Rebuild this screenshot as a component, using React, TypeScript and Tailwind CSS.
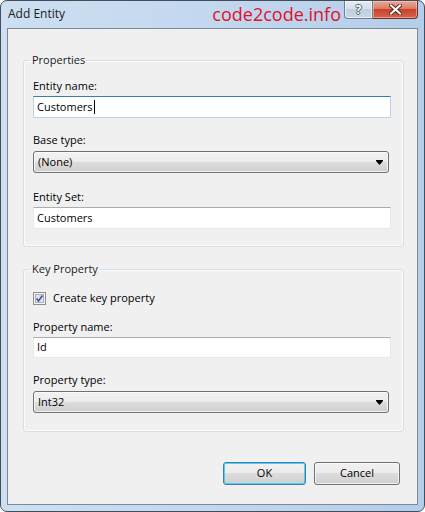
import React from "react";

const font = { fontFamily: '"Open Sans", "Noto Sans", sans-serif' };

function ComboArrow() {
    return (
        <svg width="7" height="5" viewBox="0 0 7 5" className="shrink-0">
            <path d="M0 0h7v1l-3.5 4l-3.5-4z" fill="#000" />
        </svg>
    );
}

function Combo({ value, className }: { value: string; className: string }) {
    return (
        <div
            className={`flex items-center justify-between rounded-[3px] border border-[#707070] bg-[linear-gradient(#f2f2f2_0%,#ebebeb_50%,#dddddd_50%,#cfcfcf_100%)] pl-[4px] pr-[5px] text-[11px] text-black shadow-[inset_0_0_0_1px_rgba(255,255,255,0.7)] ${className}`}
        >
            <span>{value}</span>
            <ComboArrow />
        </div>
    );
}

function TextBox({ value, focused, caret, className }: { value: string; focused?: boolean; caret?: boolean; className: string }) {
    return (
        <div
            className={`flex items-center bg-white pl-[3px] text-[11px] text-black ${
                focused
                    ? "border border-[#b9d3ea] border-t-[#3d7bad]"
                    : "border border-[#e3e9ef] border-t-[#abadb3]"
            } ${className}`}
        >
            <span>{value}</span>
            {caret && <span className="ml-px inline-block h-[14px] w-px bg-black" />}
        </div>
    );
}

function Label({ children, className }: { children: React.ReactNode; className: string }) {
    return <div className={`h-[16px] text-[11px] leading-[16px] text-black ${className}`}>{children}</div>;
}

function GroupBox({ title, className, children }: { title: string; className: string; children: React.ReactNode }) {
    return (
        <fieldset
            className={`w-[381px] rounded-[3px] border border-[#d5dfe5] pl-[9px] shadow-[inset_0_0_0_1px_#fbfbfb] ${className}`}
        >
            <legend className="-ml-[2px] h-[16px] px-[1px] text-[11px] leading-[16px] text-[#1a1a1a]">{title}</legend>
            {children}
        </fieldset>
    );
}

export default function App() {
    return (
        <div className="h-[512px] w-[425px] bg-white" style={font}>
            <div className="flex h-[512px] w-[425px] flex-col rounded-[7px] border border-[#434e5a] bg-gradient-to-r from-[#cddff1] via-[#c2d8ef] to-[#b4cde8]">
                {/* title bar */}
                <div className="flex h-[27px] items-start">
                    <span className="pl-[7px] pt-[5px] text-[12px] leading-[16px] text-[#1b1b1b]">Add Entity</span>
                    <span className="ml-auto mr-[3px] pt-[1px] text-[18px] leading-[24px] text-[#e0102c]">code2code.info</span>
                    <div className="mr-[6px] flex h-[18px]">
                        <div className="flex w-[29px] items-center justify-center rounded-bl-[4px] border border-t-0 border-[#6e7e8f] bg-[linear-gradient(#e3ebf3_0%,#d3dfeb_50%,#c0cfe0_50%,#c9d8e8_100%)] shadow-[inset_0_0_0_1px_rgba(255,255,255,0.6)]">
                            <span className="text-[12px] font-bold leading-none text-white [text-shadow:1px_0_0_#56646f,-1px_0_0_#56646f,0_1px_0_#56646f,0_-1px_0_#56646f]">?</span>
                        </div>
                        <div className="flex w-[45px] items-center justify-center rounded-br-[4px] border border-l-0 border-t-0 border-[#6b2f24] bg-[linear-gradient(#e9a898_0%,#dc7c67_45%,#c8432b_50%,#d8634a_100%)] shadow-[inset_0_0_0_1px_rgba(255,220,210,0.5)]">
                            <svg width="13" height="11" viewBox="0 0 13 11">
                                <path d="M2 1.5l9 8M11 1.5l-9 8" stroke="#5a2a22" strokeWidth="4" strokeLinecap="square" />
                                <path d="M2 1.5l9 8M11 1.5l-9 8" stroke="#ffffff" strokeWidth="2" strokeLinecap="square" />
                            </svg>
                        </div>
                    </div>
                </div>

                {/* client area */}
                <div className="mx-[6px] flex flex-1 flex-col border border-[#7c8996] bg-[#f0f0f0] pl-[15px] pt-[23px]">
                    <GroupBox title="Properties" className="pb-[17px]">
                        <Label className="mt-[10px]">Entity name:</Label>
                        <TextBox value="Customers" focused caret className="mt-[2px] h-[22px] w-[358px]" />
                        <Label className="mt-[14px]">Base type:</Label>
                        <Combo value="(None)" className="mt-[3px] h-[22px] w-[356px]" />
                        <Label className="mt-[16px]">Entity Set:</Label>
                        <TextBox value="Customers" className="mt-[2px] h-[22px] w-[358px]" />
                    </GroupBox>

                    <GroupBox title="Key Property" className="mt-[14px] pb-[18px]">
                        <div className="mt-[13px] flex h-[16px] items-center gap-[7px] text-[11px] text-black">
                            <svg width="13" height="13" viewBox="0 0 13 13" className="shrink-0">
                                <rect x="0.5" y="0.5" width="12" height="12" fill="#f4f4f4" stroke="#8e8f8f" />
                                <rect x="2.5" y="2.5" width="8" height="8" fill="#dfe3e8" stroke="#aeb3b9" />
                                <path d="M3.5 6.5l2 2.5l4-5.5" fill="none" stroke="#3f55a0" strokeWidth="1.6" />
                            </svg>
                            <span>Create key property</span>
                        </div>
                        <Label className="mt-[13px]">Property name:</Label>
                        <TextBox value="Id" className="mt-[2px] h-[21px] w-[358px]" />
                        <Label className="mt-[14px]">Property type:</Label>
                        <Combo value="Int32" className="mt-[3px] h-[22px] w-[356px]" />
                    </GroupBox>

                    <div className="mt-[30px] flex justify-end gap-[8px] pr-[17px]">
                        <button className="flex h-[23px] w-[83px] items-center justify-center rounded-[3px] border border-[#3c7fb1] bg-[linear-gradient(#f2f2f2_0%,#ebebeb_50%,#dddddd_50%,#cfcfcf_100%)] text-[11px] text-black shadow-[inset_0_0_0_1px_#48d0f8]">
                            OK
                        </button>
                        <button className="flex h-[23px] w-[86px] items-center justify-center rounded-[3px] border border-[#707070] bg-[linear-gradient(#f2f2f2_0%,#ebebeb_50%,#dddddd_50%,#cfcfcf_100%)] text-[11px] text-black shadow-[inset_0_0_0_1px_rgba(255,255,255,0.7)]">
                            Cancel
                        </button>
                    </div>
                </div>
                <div className="h-[6px]" />
            </div>
        </div>
    );
}
